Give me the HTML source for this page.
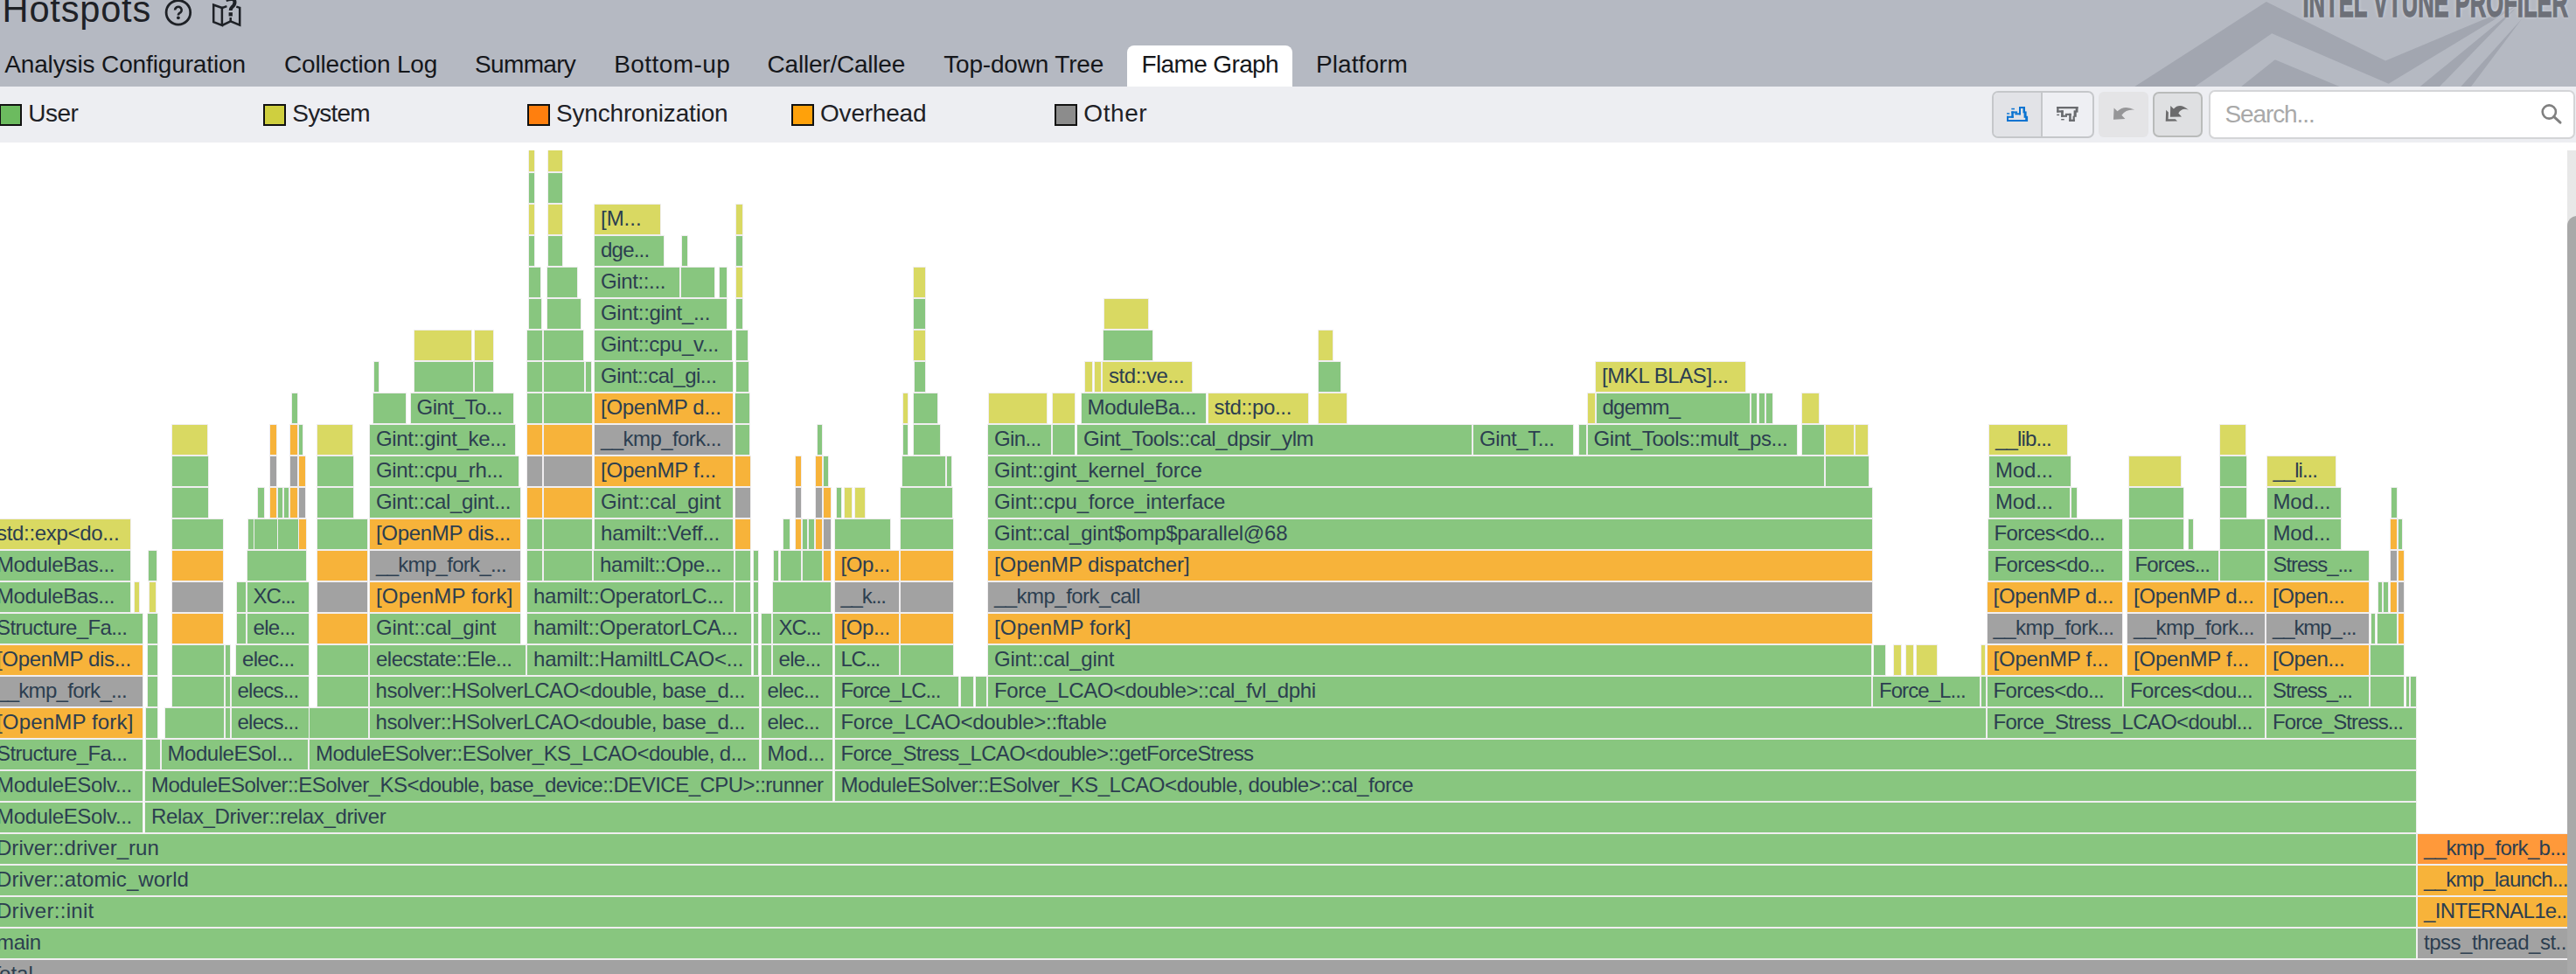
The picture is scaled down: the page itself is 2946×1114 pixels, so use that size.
<!DOCTYPE html>
<html><head><meta charset="utf-8"><title>Hotspots</title>
<style>
html,body{margin:0;padding:0}
body{width:2946px;height:1114px;overflow:hidden;background:#fff;position:relative;font-family:"Liberation Sans",sans-serif;color:#2c3e50}
#hdr{position:absolute;left:0;top:0;width:2946px;height:99px;background:#b5b9c2;overflow:hidden}
#leg{position:absolute;left:0;top:99px;width:2946px;height:64px;background:#edeef2}
#fg{position:absolute;left:0;top:172px;width:2936px;height:942px;overflow:hidden}
.b{position:absolute;height:36px;box-sizing:border-box;border:1px solid #f0eef0;overflow:hidden;white-space:nowrap;font-size:24px;line-height:26px}
.b span{position:absolute;top:3px;white-space:nowrap}

.t{position:absolute;white-space:nowrap;color:#1e2126}
.tab{top:56.7px;color:#15171b;font-size:28px;line-height:34px}
#tabsel{position:absolute;left:1289px;top:51.5px;width:189px;height:48px;background:#fff;border-radius:8px 8px 0 0}
#brand{position:absolute;right:9.3px;top:-20px;font-size:46px;line-height:46px;font-weight:bold;color:#6d7078;-webkit-text-stroke:1.3px #6d7078;white-space:nowrap;transform-origin:100% 50%;transform:scaleX(0.556);text-shadow:0 0 6px rgba(225,228,235,.9)}
.sw{position:absolute;top:19.9px;width:26.4px;height:25px;box-sizing:border-box;border:2px solid #111}
.lt{top:14px;font-size:28px;line-height:34px}
.bg1{position:absolute;left:2277.5px;top:4.5px;width:117px;height:54.7px;box-sizing:border-box;border:2px solid #c5c7ca;border-radius:7px;background:#eeeff3}
.bg1a{position:absolute;left:2279.5px;top:6.5px;width:54.5px;height:50.7px;background:#e2e3e7;border-radius:5px 0 0 5px}
.bg1d{position:absolute;left:2334px;top:6.5px;width:2px;height:50.7px;background:#c5c7ca}
.b3{position:absolute;left:2400.1px;top:6.1px;width:56.7px;height:51.5px;background:#e4e4e6;border-radius:6px}
.b4{position:absolute;left:2462.2px;top:6.1px;width:56.5px;height:51.5px;box-sizing:border-box;border:2px solid #b9bbba;border-radius:7px;background:#dfe0e2}
.srch{position:absolute;left:2526.4px;top:4px;width:419px;height:56px;box-sizing:border-box;border:2px solid #d4d5d7;border-radius:7px;background:#fff;font-size:28px;line-height:34px;color:#a9a9a9}
.srch span{position:absolute;left:16px;top:8.5px;white-space:nowrap}
#sbt{position:absolute;left:2935.5px;top:172px;width:11px;height:942px;background:#e8e8e8}
#sbh{position:absolute;left:2935.5px;top:247px;width:22px;height:900px;background:#a9a9a9;border-radius:11px}
.g{background:#88c67f}.y{background:#d9d962}.o{background:#f7b33a}.a{background:#a2a2a2}.s{background:#ff993a}
</style></head><body>

<div id="hdr">
<svg width="2946" height="99" style="position:absolute;left:0;top:0">
<g fill="#a2a6b0">
<polygon points="2441.3,99 2591.8,2.1 2728.1,69.5 2881.1,5.3 2731.7,95.8 2598.2,38.2 2510.2,99"/>
<polygon points="2563.2,99 2601.8,68.2 2675.5,99"/>
<polygon points="2767.7,99 2878,8.5 2790,99"/>
<polygon points="2814.4,99 2884.3,21.2 2826,99"/>
</g>
<g fill="none" stroke="#1e2126" stroke-width="2.8">
<circle cx="203.9" cy="14.3" r="13.8"/>
<path d="M200.1,11.5 A3.8,3.8 0 1 1 206.6,14.2 Q203.9,15.6 203.9,17.6" stroke-width="2.6"/>
</g>
<circle cx="203.9" cy="20.3" r="1.9" fill="#1e2126"/>
<g fill="none" stroke="#1e2126" stroke-width="2.5" stroke-linejoin="miter">
<path d="M244.2,5.6 L244.2,25.2 L253.9,29 L253.9,9 Z"/>
<path d="M253.9,9 L259.4,7.1"/>
<path d="M253.9,29 L263.7,24.4 L274.2,28.7 L274.2,8.8 L270.3,7.6"/>
<path d="M263.7,20 L263.7,24.4"/>
</g>
<rect x="261.6" y="14.2" width="4.3" height="4.3" fill="#1e2126"/>
<path d="M258.5,0 q10,-3 10,2.5 q0,3 -3,5.5 q-1.8,1.6 -1.8,4" fill="none" stroke="#1e2126" stroke-width="4"/>
</svg>
<div class="t" style="left:2.6px;top:-13.6px;font-size:41.6px;line-height:50px;color:#1e2126;letter-spacing:0.788px">Hotspots</div>
<div id="brand">INTEL VTUNE PROFILER</div>
<div id="tabsel"></div>
<div class="t tab" style="left:5.2px;letter-spacing:-0.132px">Analysis Configuration</div>
<div class="t tab" style="left:324.9px;letter-spacing:-0.154px">Collection Log</div>
<div class="t tab" style="left:543.1px;letter-spacing:-0.67px">Summary</div>
<div class="t tab" style="left:702.2px;letter-spacing:0.444px">Bottom-up</div>
<div class="t tab" style="left:877.6px;letter-spacing:-0.219px">Caller/Callee</div>
<div class="t tab" style="left:1079.2px;letter-spacing:-0.174px">Top-down Tree</div>
<div class="t tab" style="left:1305.5px;letter-spacing:-0.628px">Flame Graph</div>
<div class="t tab" style="left:1505px;letter-spacing:0.086px">Platform</div>
</div>
<div id="leg">
<div class="sw" style="left:-1.2px;background:#6cbb5f"></div>
<div class="t lt" style="left:32.3px;letter-spacing:-0.527px">User</div>
<div class="sw" style="left:300.8px;background:#cfcf3f"></div>
<div class="t lt" style="left:334.3px;letter-spacing:-0.802px">System</div>
<div class="sw" style="left:602.5px;background:#ff7f0e"></div>
<div class="t lt" style="left:636px;letter-spacing:-0.185px">Synchronization</div>
<div class="sw" style="left:904.5px;background:#ffa10a"></div>
<div class="t lt" style="left:938px;letter-spacing:-0.201px">Overhead</div>
<div class="sw" style="left:1205.8px;background:#8c8c8c"></div>
<div class="t lt" style="left:1239.3px;letter-spacing:0.584px">Other</div>
<div class="bg1"></div><div class="bg1a"></div><div class="bg1d"></div>
<div class="b3"></div><div class="b4"></div>
<div class="srch"><span style="letter-spacing:-1.092px">Search...</span></div>
<svg width="2946" height="64" viewBox="0 99 2946 64" style="position:absolute;left:0;top:0">
<g fill="#0b74d1" transform="translate(2295,122)">
<rect x="0" y="15" width="24" height="2"/><rect x="0" y="10.8" width="2" height="6.2"/><rect x="0" y="10.8" width="7.8" height="2"/>
<rect x="5.3" y="5.4" width="2.5" height="7.4"/><rect x="5.3" y="5.4" width="6.8" height="2"/><rect x="9.4" y="7.3" width="6.6" height="2"/>
<rect x="14" y="0" width="2" height="9.3"/><rect x="14" y="0" width="7" height="2"/><rect x="18.5" y="0" width="2.5" height="7.3"/>
<rect x="19.6" y="5.4" width="3" height="7.4"/><rect x="21.2" y="10.8" width="2.9" height="6.2"/>
<rect x="5.3" y="1.8" width="3.7" height="1.5"/><rect x="0" y="7.2" width="3.2" height="1.4"/>
</g>
<g fill="#696b6f" transform="translate(2352.2,122)">
<rect x="0" y="0" width="24.3" height="2.3"/><rect x="0" y="0" width="2.3" height="6.6"/><rect x="0" y="4.3" width="7.6" height="2.3"/>
<rect x="4.9" y="4.3" width="2.7" height="7.5"/><rect x="4.9" y="9.7" width="6.9" height="2.1"/><rect x="9.7" y="7.8" width="6.8" height="2.1"/>
<rect x="14" y="7.8" width="2.5" height="9.1"/><rect x="14" y="14.6" width="6.6" height="2.3"/><rect x="18.4" y="10.7" width="2.2" height="6.2"/>
<rect x="19.4" y="4.3" width="3.1" height="7.5"/><rect x="21.5" y="0" width="2.8" height="6.6"/>
<rect x="0" y="8.7" width="2.9" height="1.4"/><rect x="5" y="14" width="3.5" height="1.4"/>
</g>
<path fill="#969698" d="M2417.6,123.6 L2421.5,127.2 Q2429.5,119.5 2441.2,125.6 Q2431.6,124.5 2426.4,131.8 L2430.4,136 L2417,136.8 Z"/>
<path fill="#6b6b6c" d="M2482.25,120.9 L2485.9,124.5 Q2493,117 2502.9,125.8 Q2495.5,122.8 2491.3,129.4 L2495,133.4 L2481.9,133.7 Z"/>
<path fill="#6b6b6c" d="M2477.2,125.8 L2479.9,128.45 L2479.6,136.3 L2487.7,136.2 L2490.1,138.5 L2476.7,138.8 Z"/>
<circle cx="2915.3" cy="128" r="7.6" fill="none" stroke="#808080" stroke-width="2.6"/>
<path d="M2920.6,133.4 L2928,140.2" stroke="#808080" stroke-width="3" stroke-linecap="round"/>
</svg>
</div>
<div id="fg">
<div class="b y" style="left:604px;top:-11px;width:7.5px"></div>
<div class="b y" style="left:626px;top:-11px;width:17.5px"></div>
<div class="b g" style="left:604px;top:25px;width:7.5px"></div>
<div class="b g" style="left:626px;top:25px;width:17.5px"></div>
<div class="b y" style="left:604px;top:61px;width:7.5px"></div>
<div class="b y" style="left:626px;top:61px;width:17.5px"></div>
<div class="b y" style="left:679px;top:61px;width:76.5px"><span style="left:7px;letter-spacing:-0.019px">[M...</span></div>
<div class="b y" style="left:840.5px;top:61px;width:9px"></div>
<div class="b g" style="left:604px;top:97px;width:7.5px"></div>
<div class="b g" style="left:626px;top:97px;width:17.5px"></div>
<div class="b g" style="left:679px;top:97px;width:80.5px"><span style="left:7px;letter-spacing:-0.779px">dge...</span></div>
<div class="b g" style="left:778.5px;top:97px;width:8px"></div>
<div class="b g" style="left:840.5px;top:97px;width:9px"></div>
<div class="b g" style="left:604px;top:133px;width:14.5px"></div>
<div class="b g" style="left:625px;top:133px;width:35.5px"></div>
<div class="b g" style="left:679px;top:133px;width:99px"><span style="left:7px;letter-spacing:-0.375px">Gint::...</span></div>
<div class="b g" style="left:777.5px;top:133px;width:40px"></div>
<div class="b g" style="left:821.5px;top:133px;width:10px"></div>
<div class="b y" style="left:840.5px;top:133px;width:9px"></div>
<div class="b y" style="left:1043.5px;top:133px;width:15.5px"></div>
<div class="b g" style="left:604px;top:169px;width:15.5px"></div>
<div class="b g" style="left:625px;top:169px;width:39.5px"></div>
<div class="b g" style="left:679px;top:169px;width:153px"><span style="left:7px;letter-spacing:-0.308px">Gint::gint_...</span></div>
<div class="b g" style="left:840.5px;top:169px;width:9px"></div>
<div class="b g" style="left:1043.5px;top:169px;width:15.5px"></div>
<div class="b y" style="left:1262px;top:169px;width:51.5px"></div>
<div class="b y" style="left:473px;top:205px;width:67px"></div>
<div class="b y" style="left:541.5px;top:205px;width:23px"></div>
<div class="b g" style="left:601.5px;top:205px;width:19px"></div>
<div class="b g" style="left:621px;top:205px;width:46.5px"></div>
<div class="b g" style="left:679px;top:205px;width:158.5px"><span style="left:7px;letter-spacing:-0.338px">Gint::cpu_v...</span></div>
<div class="b g" style="left:840.5px;top:205px;width:15.5px"></div>
<div class="b y" style="left:1043.5px;top:205px;width:15.5px"></div>
<div class="b g" style="left:1260.5px;top:205px;width:58px"></div>
<div class="b y" style="left:1507px;top:205px;width:18px"></div>
<div class="b g" style="left:426.5px;top:241px;width:7.5px"></div>
<div class="b g" style="left:473px;top:241px;width:69px"></div>
<div class="b g" style="left:541.5px;top:241px;width:23px"></div>
<div class="b g" style="left:601.5px;top:241px;width:19px"></div>
<div class="b g" style="left:621px;top:241px;width:48px"></div>
<div class="b g" style="left:669px;top:241px;width:8px"></div>
<div class="b g" style="left:679px;top:241px;width:160px"><span style="left:7px;letter-spacing:-0.518px">Gint::cal_gi...</span></div>
<div class="b g" style="left:840.5px;top:241px;width:16.5px"></div>
<div class="b g" style="left:1044.5px;top:241px;width:14.5px"></div>
<div class="b y" style="left:1240px;top:241px;width:10px"></div>
<div class="b y" style="left:1250.5px;top:241px;width:9px"></div>
<div class="b y" style="left:1260px;top:241px;width:104px"><span style="left:7px;letter-spacing:-0.459px">std::ve...</span></div>
<div class="b g" style="left:1507px;top:241px;width:27px"></div>
<div class="b y" style="left:1824px;top:241px;width:172.5px"><span style="left:7px;letter-spacing:-0.415px">[MKL BLAS]...</span></div>
<div class="b g" style="left:333px;top:277px;width:7.5px"></div>
<div class="b g" style="left:425.5px;top:277px;width:39px"></div>
<div class="b g" style="left:468.5px;top:277px;width:119px"><span style="left:7px;letter-spacing:-0.484px">Gint_To...</span></div>
<div class="b g" style="left:601.5px;top:277px;width:19px"></div>
<div class="b g" style="left:621px;top:277px;width:57px"></div>
<div class="b o" style="left:679px;top:277px;width:160px"><span style="left:7px;letter-spacing:-0.283px">[OpenMP d...</span></div>
<div class="b g" style="left:839.5px;top:277px;width:18.5px"></div>
<div class="b y" style="left:1032px;top:277px;width:6.5px"></div>
<div class="b g" style="left:1043.5px;top:277px;width:29.5px"></div>
<div class="b y" style="left:1130px;top:277px;width:68px"></div>
<div class="b y" style="left:1203px;top:277px;width:27px"></div>
<div class="b g" style="left:1235.5px;top:277px;width:144.5px"><span style="left:7px;letter-spacing:-0.322px">ModuleBa...</span></div>
<div class="b y" style="left:1380.5px;top:277px;width:116.5px"><span style="left:7px;letter-spacing:-0.359px">std::po...</span></div>
<div class="b y" style="left:1507px;top:277px;width:33.5px"></div>
<div class="b y" style="left:1814.5px;top:277px;width:10px"></div>
<div class="b g" style="left:1824.5px;top:277px;width:177.5px"><span style="left:7px;letter-spacing:-0.747px">dgemm_</span></div>
<div class="b g" style="left:2002px;top:277px;width:8px"></div>
<div class="b g" style="left:2010.5px;top:277px;width:8px"></div>
<div class="b g" style="left:2018.5px;top:277px;width:9px"></div>
<div class="b y" style="left:2059.5px;top:277px;width:21.5px"></div>
<div class="b y" style="left:196px;top:313px;width:41.5px"></div>
<div class="b o" style="left:308px;top:313px;width:8.5px"></div>
<div class="b o" style="left:331px;top:313px;width:9.5px"></div>
<div class="b g" style="left:340.5px;top:313px;width:6.5px"></div>
<div class="b y" style="left:361.5px;top:313px;width:42px"></div>
<div class="b g" style="left:422px;top:313px;width:168px"><span style="left:7px;letter-spacing:-0.343px">Gint::gint_ke...</span></div>
<div class="b o" style="left:601.5px;top:313px;width:19px"></div>
<div class="b o" style="left:621px;top:313px;width:57px"></div>
<div class="b a" style="left:679px;top:313px;width:160px"><span style="left:7px;letter-spacing:-0.575px">__kmp_fork...</span></div>
<div class="b g" style="left:839.5px;top:313px;width:18.5px"></div>
<div class="b g" style="left:933.5px;top:313px;width:7.5px"></div>
<div class="b g" style="left:1031.5px;top:313px;width:7.5px"></div>
<div class="b g" style="left:1043.5px;top:313px;width:32.5px"></div>
<div class="b g" style="left:1129px;top:313px;width:74px"><span style="left:7px;letter-spacing:-0.633px">Gin...</span></div>
<div class="b g" style="left:1203px;top:313px;width:27px"></div>
<div class="b g" style="left:1231px;top:313px;width:453px"><span style="left:7px;letter-spacing:-0.41px">Gint_Tools::cal_dpsir_ylm</span></div>
<div class="b g" style="left:1684px;top:313px;width:115.5px"><span style="left:7px;letter-spacing:-0.431px">Gint_T...</span></div>
<div class="b g" style="left:1804.5px;top:313px;width:10.5px"></div>
<div class="b g" style="left:1814.5px;top:313px;width:241.5px"><span style="left:7px;letter-spacing:-0.409px">Gint_Tools::mult_ps...</span></div>
<div class="b g" style="left:2059.5px;top:313px;width:27px"></div>
<div class="b y" style="left:2087px;top:313px;width:33.5px"></div>
<div class="b y" style="left:2120.5px;top:313px;width:16.5px"></div>
<div class="b y" style="left:2274px;top:313px;width:90.5px"><span style="left:7px;letter-spacing:-0.855px">__lib...</span></div>
<div class="b y" style="left:2538px;top:313px;width:31px"></div>
<div class="b g" style="left:196px;top:349px;width:43px"></div>
<div class="b a" style="left:308px;top:349px;width:8.5px"></div>
<div class="b a" style="left:331px;top:349px;width:9.5px"></div>
<div class="b o" style="left:340.5px;top:349px;width:9.5px"></div>
<div class="b g" style="left:361.5px;top:349px;width:43.5px"></div>
<div class="b g" style="left:422px;top:349px;width:171.5px"><span style="left:7px;letter-spacing:-0.355px">Gint::cpu_rh...</span></div>
<div class="b a" style="left:601.5px;top:349px;width:19px"></div>
<div class="b a" style="left:621px;top:349px;width:57px"></div>
<div class="b o" style="left:679px;top:349px;width:160px"><span style="left:7px;letter-spacing:-0.191px">[OpenMP f...</span></div>
<div class="b o" style="left:839.5px;top:349px;width:19px"></div>
<div class="b o" style="left:909px;top:349px;width:8px"></div>
<div class="b o" style="left:932px;top:349px;width:9px"></div>
<div class="b g" style="left:941px;top:349px;width:6.5px"></div>
<div class="b g" style="left:1031px;top:349px;width:51px"></div>
<div class="b g" style="left:1082px;top:349px;width:7px"></div>
<div class="b g" style="left:1129px;top:349px;width:958px"><span style="left:7px;letter-spacing:-0.17px">Gint::gint_kernel_force</span></div>
<div class="b g" style="left:2087px;top:349px;width:50.5px"></div>
<div class="b g" style="left:2274px;top:349px;width:94.5px"><span style="left:7px;letter-spacing:-0.13px">Mod...</span></div>
<div class="b y" style="left:2433.5px;top:349px;width:61px"></div>
<div class="b g" style="left:2538px;top:349px;width:32px"></div>
<div class="b y" style="left:2591.5px;top:349px;width:80.5px"><span style="left:7px;letter-spacing:-0.991px">__li...</span></div>
<div class="b g" style="left:196px;top:385px;width:43px"></div>
<div class="b g" style="left:294px;top:385px;width:9px"></div>
<div class="b o" style="left:308px;top:385px;width:8.5px"></div>
<div class="b g" style="left:317px;top:385px;width:6.5px"></div>
<div class="b g" style="left:323.5px;top:385px;width:7.5px"></div>
<div class="b o" style="left:331px;top:385px;width:9.5px"></div>
<div class="b a" style="left:340.5px;top:385px;width:9.5px"></div>
<div class="b g" style="left:361.5px;top:385px;width:43.5px"></div>
<div class="b g" style="left:422px;top:385px;width:173.5px"><span style="left:7px;letter-spacing:-0.35px">Gint::cal_gint...</span></div>
<div class="b o" style="left:601.5px;top:385px;width:19px"></div>
<div class="b o" style="left:621px;top:385px;width:57px"></div>
<div class="b g" style="left:679px;top:385px;width:160px"><span style="left:7px;letter-spacing:-0.208px">Gint::cal_gint</span></div>
<div class="b a" style="left:839.5px;top:385px;width:19px"></div>
<div class="b a" style="left:909px;top:385px;width:8px"></div>
<div class="b a" style="left:932px;top:385px;width:9px"></div>
<div class="b o" style="left:941px;top:385px;width:9.5px"></div>
<div class="b g" style="left:956px;top:385px;width:6.5px"></div>
<div class="b y" style="left:965px;top:385px;width:9.5px"></div>
<div class="b y" style="left:977px;top:385px;width:12.5px"></div>
<div class="b g" style="left:1028.5px;top:385px;width:61.5px"></div>
<div class="b g" style="left:1129px;top:385px;width:1012.5px"><span style="left:7px;letter-spacing:-0.157px">Gint::cpu_force_interface</span></div>
<div class="b g" style="left:2274px;top:385px;width:94px"><span style="left:7px;letter-spacing:-0.13px">Mod...</span></div>
<div class="b g" style="left:2368px;top:385px;width:8px"></div>
<div class="b g" style="left:2433.5px;top:385px;width:64.5px"></div>
<div class="b g" style="left:2538px;top:385px;width:32px"></div>
<div class="b g" style="left:2591.5px;top:385px;width:86.5px"><span style="left:7px;letter-spacing:-0.13px">Mod...</span></div>
<div class="b g" style="left:2734px;top:385px;width:8px"></div>
<div class="b y" style="left:-12px;top:421px;width:162px"><span style="left:7px;letter-spacing:-0.319px">std::exp&lt;do...</span></div>
<div class="b g" style="left:196px;top:421px;width:59.5px"></div>
<div class="b g" style="left:283px;top:421px;width:7.5px"></div>
<div class="b g" style="left:289.5px;top:421px;width:28px"></div>
<div class="b g" style="left:316.5px;top:421px;width:25px"></div>
<div class="b o" style="left:340.5px;top:421px;width:10px"></div>
<div class="b g" style="left:361.5px;top:421px;width:59.5px"></div>
<div class="b o" style="left:422px;top:421px;width:173.5px"><span style="left:7px;letter-spacing:-0.326px">[OpenMP dis...</span></div>
<div class="b g" style="left:601.5px;top:421px;width:19px"></div>
<div class="b g" style="left:621px;top:421px;width:57px"></div>
<div class="b g" style="left:679px;top:421px;width:160px"><span style="left:7px;letter-spacing:-0.147px">hamilt::Veff...</span></div>
<div class="b o" style="left:839.5px;top:421px;width:19px"></div>
<div class="b g" style="left:895px;top:421px;width:9px"></div>
<div class="b o" style="left:909px;top:421px;width:8px"></div>
<div class="b g" style="left:917px;top:421px;width:7px"></div>
<div class="b g" style="left:924px;top:421px;width:7.5px"></div>
<div class="b o" style="left:932px;top:421px;width:9px"></div>
<div class="b a" style="left:941px;top:421px;width:9.5px"></div>
<div class="b g" style="left:953.5px;top:421px;width:65px"></div>
<div class="b g" style="left:1028.5px;top:421px;width:62.5px"></div>
<div class="b g" style="left:1129px;top:421px;width:1012.5px"><span style="left:7px;letter-spacing:-0.221px">Gint::cal_gint$omp$parallel@68</span></div>
<div class="b g" style="left:2272.5px;top:421px;width:155.5px"><span style="left:7px;letter-spacing:-0.62px">Forces&lt;do...</span></div>
<div class="b g" style="left:2433.5px;top:421px;width:64.5px"></div>
<div class="b g" style="left:2502px;top:421px;width:6.5px"></div>
<div class="b g" style="left:2538px;top:421px;width:53px"></div>
<div class="b g" style="left:2591.5px;top:421px;width:86.5px"><span style="left:7px;letter-spacing:-0.13px">Mod...</span></div>
<div class="b o" style="left:2732.5px;top:421px;width:9px"></div>
<div class="b g" style="left:2742px;top:421px;width:6px"></div>
<div class="b g" style="left:-12px;top:457px;width:161.5px"><span style="left:7px;letter-spacing:-0.43px">ModuleBas...</span></div>
<div class="b g" style="left:169px;top:457px;width:10.5px"></div>
<div class="b o" style="left:196px;top:457px;width:59.5px"></div>
<div class="b g" style="left:282px;top:457px;width:68.5px"></div>
<div class="b o" style="left:361.5px;top:457px;width:59.5px"></div>
<div class="b a" style="left:422px;top:457px;width:173.5px"><span style="left:7px;letter-spacing:-0.7px">__kmp_fork_...</span></div>
<div class="b g" style="left:602px;top:457px;width:19px"></div>
<div class="b g" style="left:620.5px;top:457px;width:57.5px"></div>
<div class="b g" style="left:678px;top:457px;width:161.5px"><span style="left:7px;letter-spacing:-0.256px">hamilt::Ope...</span></div>
<div class="b g" style="left:839.5px;top:457px;width:19.5px"></div>
<div class="b g" style="left:861px;top:457px;width:6.5px"></div>
<div class="b g" style="left:884px;top:457px;width:7px"></div>
<div class="b g" style="left:891.5px;top:457px;width:25.5px"></div>
<div class="b g" style="left:917px;top:457px;width:24px"></div>
<div class="b o" style="left:941px;top:457px;width:9.5px"></div>
<div class="b o" style="left:953.5px;top:457px;width:75px"><span style="left:7px;letter-spacing:-0.424px">[Op...</span></div>
<div class="b o" style="left:1028.5px;top:457px;width:62.5px"></div>
<div class="b o" style="left:1129px;top:457px;width:1012.5px"><span style="left:7px;letter-spacing:-0.079px">[OpenMP dispatcher]</span></div>
<div class="b g" style="left:2272.5px;top:457px;width:155.5px"><span style="left:7px;letter-spacing:-0.62px">Forces&lt;do...</span></div>
<div class="b g" style="left:2433.5px;top:457px;width:104.5px"><span style="left:7px;letter-spacing:-0.856px">Forces...</span></div>
<div class="b g" style="left:2538px;top:457px;width:53px"></div>
<div class="b g" style="left:2591.5px;top:457px;width:118.5px"><span style="left:7px;letter-spacing:-1.062px">Stress_...</span></div>
<div class="b a" style="left:2732.5px;top:457px;width:9px"></div>
<div class="b o" style="left:2742px;top:457px;width:7.5px"></div>
<div class="b g" style="left:-12px;top:493px;width:161.5px"><span style="left:7px;letter-spacing:-0.43px">ModuleBas...</span></div>
<div class="b y" style="left:152.5px;top:493px;width:7px"></div>
<div class="b y" style="left:169.5px;top:493px;width:9.5px"></div>
<div class="b a" style="left:196px;top:493px;width:59.5px"></div>
<div class="b g" style="left:269.5px;top:493px;width:12.5px"></div>
<div class="b g" style="left:281.5px;top:493px;width:72px"><span style="left:7px;letter-spacing:-1.097px">XC...</span></div>
<div class="b a" style="left:361.5px;top:493px;width:59.5px"></div>
<div class="b o" style="left:422px;top:493px;width:173.5px"><span style="left:7px;letter-spacing:0.173px">[OpenMP fork]</span></div>
<div class="b g" style="left:602px;top:493px;width:237.5px"><span style="left:7px;letter-spacing:-0.241px">hamilt::OperatorLC...</span></div>
<div class="b g" style="left:839.5px;top:493px;width:19.5px"></div>
<div class="b g" style="left:861px;top:493px;width:6.5px"></div>
<div class="b g" style="left:883px;top:493px;width:67.5px"></div>
<div class="b a" style="left:953.5px;top:493px;width:75px"><span style="left:7px;letter-spacing:-1.253px">__k...</span></div>
<div class="b a" style="left:1028.5px;top:493px;width:62.5px"></div>
<div class="b a" style="left:1129px;top:493px;width:1012.5px"><span style="left:7px;letter-spacing:-0.537px">__kmp_fork_call</span></div>
<div class="b o" style="left:2271.5px;top:493px;width:156.5px"><span style="left:7px;letter-spacing:-0.283px">[OpenMP d...</span></div>
<div class="b o" style="left:2432px;top:493px;width:159px"><span style="left:7px;letter-spacing:-0.283px">[OpenMP d...</span></div>
<div class="b o" style="left:2591px;top:493px;width:119px"><span style="left:7px;letter-spacing:-0.396px">[Open...</span></div>
<div class="b g" style="left:2718.5px;top:493px;width:6px"></div>
<div class="b g" style="left:2725px;top:493px;width:7px"></div>
<div class="b o" style="left:2732.5px;top:493px;width:9px"></div>
<div class="b a" style="left:2742px;top:493px;width:7.5px"></div>
<div class="b g" style="left:-12px;top:529px;width:176px"><span style="left:7px;letter-spacing:-0.628px">Structure_Fa...</span></div>
<div class="b g" style="left:167.5px;top:529px;width:13px"></div>
<div class="b o" style="left:196px;top:529px;width:59.5px"></div>
<div class="b g" style="left:269.5px;top:529px;width:12.5px"></div>
<div class="b g" style="left:281.5px;top:529px;width:72px"><span style="left:7px;letter-spacing:-0.677px">ele...</span></div>
<div class="b o" style="left:361.5px;top:529px;width:59.5px"></div>
<div class="b g" style="left:422px;top:529px;width:173.5px"><span style="left:7px;letter-spacing:-0.208px">Gint::cal_gint</span></div>
<div class="b g" style="left:602px;top:529px;width:258px"><span style="left:7px;letter-spacing:-0.219px">hamilt::OperatorLCA...</span></div>
<div class="b g" style="left:860.5px;top:529px;width:7.5px"></div>
<div class="b g" style="left:870px;top:529px;width:12.5px"></div>
<div class="b g" style="left:882.5px;top:529px;width:70.5px"><span style="left:7px;letter-spacing:-1.097px">XC...</span></div>
<div class="b o" style="left:953.5px;top:529px;width:75px"><span style="left:7px;letter-spacing:-0.424px">[Op...</span></div>
<div class="b o" style="left:1028.5px;top:529px;width:62.5px"></div>
<div class="b o" style="left:1129px;top:529px;width:1012.5px"><span style="left:7px;letter-spacing:0.173px">[OpenMP fork]</span></div>
<div class="b a" style="left:2271.5px;top:529px;width:156.5px"><span style="left:7px;letter-spacing:-0.575px">__kmp_fork...</span></div>
<div class="b a" style="left:2432px;top:529px;width:159px"><span style="left:7px;letter-spacing:-0.575px">__kmp_fork...</span></div>
<div class="b a" style="left:2591px;top:529px;width:119px"><span style="left:7px;letter-spacing:-1.111px">__kmp_...</span></div>
<div class="b g" style="left:2710.5px;top:529px;width:6.5px"></div>
<div class="b g" style="left:2718px;top:529px;width:24px"></div>
<div class="b o" style="left:2742px;top:529px;width:7.5px"></div>
<div class="b o" style="left:-12px;top:565px;width:176px"><span style="left:7px;letter-spacing:-0.326px">[OpenMP dis...</span></div>
<div class="b g" style="left:167.5px;top:565px;width:13.5px"></div>
<div class="b g" style="left:196px;top:565px;width:60.5px"></div>
<div class="b g" style="left:256.5px;top:565px;width:7.5px"></div>
<div class="b g" style="left:269px;top:565px;width:84.5px"><span style="left:7px;letter-spacing:-0.658px">elec...</span></div>
<div class="b g" style="left:361.5px;top:565px;width:60.5px"></div>
<div class="b g" style="left:422px;top:565px;width:179.5px"><span style="left:7px;letter-spacing:-0.506px">elecstate::Ele...</span></div>
<div class="b g" style="left:602px;top:565px;width:258px"><span style="left:7px;letter-spacing:-0.206px">hamilt::HamiltLCAO&lt;...</span></div>
<div class="b g" style="left:860.5px;top:565px;width:7.5px"></div>
<div class="b g" style="left:870px;top:565px;width:12.5px"></div>
<div class="b g" style="left:882.5px;top:565px;width:70.5px"><span style="left:7px;letter-spacing:-0.677px">ele...</span></div>
<div class="b g" style="left:953.5px;top:565px;width:75px"><span style="left:7px;letter-spacing:-1.231px">LC...</span></div>
<div class="b g" style="left:1028.5px;top:565px;width:62.5px"></div>
<div class="b g" style="left:1129px;top:565px;width:1012px"><span style="left:7px;letter-spacing:-0.208px">Gint::cal_gint</span></div>
<div class="b g" style="left:2141.5px;top:565px;width:15.5px"></div>
<div class="b y" style="left:2164.5px;top:565px;width:10.5px"></div>
<div class="b y" style="left:2179px;top:565px;width:9.5px"></div>
<div class="b y" style="left:2191px;top:565px;width:24.5px"></div>
<div class="b y" style="left:2265px;top:565px;width:6px"></div>
<div class="b o" style="left:2271.5px;top:565px;width:156.5px"><span style="left:7px;letter-spacing:-0.191px">[OpenMP f...</span></div>
<div class="b o" style="left:2432px;top:565px;width:159px"><span style="left:7px;letter-spacing:-0.191px">[OpenMP f...</span></div>
<div class="b o" style="left:2591px;top:565px;width:119px"><span style="left:7px;letter-spacing:-0.396px">[Open...</span></div>
<div class="b g" style="left:2710px;top:565px;width:40px"></div>
<div class="b a" style="left:-12px;top:601px;width:176px"><span style="left:7px;letter-spacing:-0.7px">__kmp_fork_...</span></div>
<div class="b g" style="left:167.5px;top:601px;width:13.5px"></div>
<div class="b g" style="left:196px;top:601px;width:60.5px"></div>
<div class="b g" style="left:256.5px;top:601px;width:7.5px"></div>
<div class="b g" style="left:263.5px;top:601px;width:90px"><span style="left:7px;letter-spacing:-0.777px">elecs...</span></div>
<div class="b g" style="left:361.5px;top:601px;width:60.5px"></div>
<div class="b g" style="left:421.5px;top:601px;width:447.5px"><span style="left:7px;letter-spacing:-0.451px">hsolver::HSolverLCAO&lt;double, base_d...</span></div>
<div class="b g" style="left:869.5px;top:601px;width:83.5px"><span style="left:7px;letter-spacing:-0.658px">elec...</span></div>
<div class="b g" style="left:953.5px;top:601px;width:143.5px"><span style="left:7px;letter-spacing:-1.048px">Force_LC...</span></div>
<div class="b g" style="left:1097.5px;top:601px;width:16.5px"></div>
<div class="b g" style="left:1114.5px;top:601px;width:14px"></div>
<div class="b g" style="left:1129px;top:601px;width:1012px"><span style="left:7px;letter-spacing:-0.396px">Force_LCAO&lt;double&gt;::cal_fvl_dphi</span></div>
<div class="b g" style="left:2141px;top:601px;width:124px"><span style="left:7px;letter-spacing:-0.944px">Force_L...</span></div>
<div class="b g" style="left:2265px;top:601px;width:6.5px"></div>
<div class="b g" style="left:2271.5px;top:601px;width:156.5px"><span style="left:7px;letter-spacing:-0.62px">Forces&lt;do...</span></div>
<div class="b g" style="left:2428px;top:601px;width:163px"><span style="left:7px;letter-spacing:-0.57px">Forces&lt;dou...</span></div>
<div class="b g" style="left:2591px;top:601px;width:119px"><span style="left:7px;letter-spacing:-1.062px">Stress_...</span></div>
<div class="b g" style="left:2710px;top:601px;width:40px"></div>
<div class="b g" style="left:2750.5px;top:601px;width:5px"></div>
<div class="b g" style="left:2755.5px;top:601px;width:8px"></div>
<div class="b o" style="left:-12px;top:637px;width:176px"><span style="left:7px;letter-spacing:0.173px">[OpenMP fork]</span></div>
<div class="b g" style="left:166px;top:637px;width:15px"></div>
<div class="b g" style="left:187.5px;top:637px;width:69px"></div>
<div class="b g" style="left:256.5px;top:637px;width:7.5px"></div>
<div class="b g" style="left:263.5px;top:637px;width:90px"><span style="left:7px;letter-spacing:-0.777px">elecs...</span></div>
<div class="b g" style="left:353px;top:637px;width:69px"></div>
<div class="b g" style="left:421.5px;top:637px;width:447.5px"><span style="left:7px;letter-spacing:-0.451px">hsolver::HSolverLCAO&lt;double, base_d...</span></div>
<div class="b g" style="left:869.5px;top:637px;width:83.5px"><span style="left:7px;letter-spacing:-0.658px">elec...</span></div>
<div class="b g" style="left:953.5px;top:637px;width:1318px"><span style="left:7px;letter-spacing:-0.312px">Force_LCAO&lt;double&gt;::ftable</span></div>
<div class="b g" style="left:2271.5px;top:637px;width:319.5px"><span style="left:7px;letter-spacing:-0.694px">Force_Stress_LCAO&lt;doubl...</span></div>
<div class="b g" style="left:2591px;top:637px;width:172.5px"><span style="left:7px;letter-spacing:-0.911px">Force_Stress...</span></div>
<div class="b g" style="left:-12px;top:673px;width:176px"><span style="left:7px;letter-spacing:-0.628px">Structure_Fa...</span></div>
<div class="b g" style="left:166px;top:673px;width:18px"></div>
<div class="b g" style="left:183.5px;top:673px;width:169.5px"><span style="left:7px;letter-spacing:-0.468px">ModuleESol...</span></div>
<div class="b g" style="left:353px;top:673px;width:516px"><span style="left:7px;letter-spacing:-0.558px">ModuleESolver::ESolver_KS_LCAO&lt;double, d...</span></div>
<div class="b g" style="left:869.5px;top:673px;width:83.5px"><span style="left:7px;letter-spacing:-0.13px">Mod...</span></div>
<div class="b g" style="left:953.5px;top:673px;width:1810px"><span style="left:7px;letter-spacing:-0.625px">Force_Stress_LCAO&lt;double&gt;::getForceStress</span></div>
<div class="b g" style="left:-12px;top:709px;width:176px"><span style="left:7px;letter-spacing:-0.336px">ModuleESolv...</span></div>
<div class="b g" style="left:165px;top:709px;width:788px"><span style="left:7px;letter-spacing:-0.523px">ModuleESolver::ESolver_KS&lt;double, base_device::DEVICE_CPU&gt;::runner</span></div>
<div class="b g" style="left:953.5px;top:709px;width:1810px"><span style="left:7px;letter-spacing:-0.454px">ModuleESolver::ESolver_KS_LCAO&lt;double, double&gt;::cal_force</span></div>
<div class="b g" style="left:-12px;top:745px;width:176px"><span style="left:7px;letter-spacing:-0.336px">ModuleESolv...</span></div>
<div class="b g" style="left:165px;top:745px;width:2598.5px"><span style="left:7px;letter-spacing:-0.351px">Relax_Driver::relax_driver</span></div>
<div class="b g" style="left:-12px;top:781px;width:2775.5px"><span style="left:7px;letter-spacing:0.026px">Driver::driver_run</span></div>
<div class="b s" style="left:2764px;top:781px;width:187px"><span style="left:7px;letter-spacing:-0.647px">__kmp_fork_b...</span></div>
<div class="b g" style="left:-12px;top:817px;width:2775.5px"><span style="left:7px;letter-spacing:0.062px">Driver::atomic_world</span></div>
<div class="b o" style="left:2764px;top:817px;width:187px"><span style="left:7px;letter-spacing:-0.768px">__kmp_launch...</span></div>
<div class="b g" style="left:-12px;top:853px;width:2775.5px"><span style="left:7px;letter-spacing:0.289px">Driver::init</span></div>
<div class="b o" style="left:2764px;top:853px;width:187px"><span style="left:7px;letter-spacing:-0.653px">_INTERNAL1e...</span></div>
<div class="b g" style="left:-12px;top:889px;width:2775.5px"><span style="left:7px;letter-spacing:-0.301px">main</span></div>
<div class="b a" style="left:2764px;top:889px;width:187px"><span style="left:7px;letter-spacing:-0.489px">tpss_thread_st...</span></div>
<div class="b a" style="left:-21px;top:925px;width:2972px"><span style="left:7px;letter-spacing:0.028px">Total</span></div>
</div>
<div id="sbt"></div><div id="sbh"></div>
</body></html>
